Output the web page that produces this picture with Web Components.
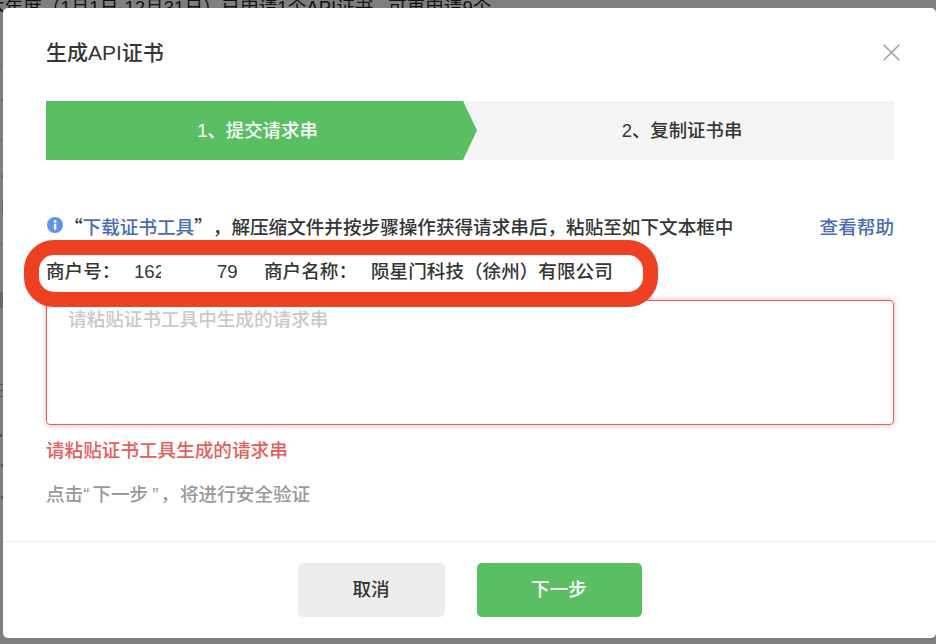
<!DOCTYPE html>
<html lang="zh-CN"><head><meta charset="utf-8">
<style>
html,body{margin:0;height:100%;overflow:hidden;background:#7f7f7f}
body{font-family:"Liberation Sans","Noto Sans CJK SC",sans-serif}
</style></head><body>
<api-page></api-page>
<template id="t-page"><style>
:host{display:block;position:relative;width:936px;height:644px;overflow:hidden;background:#7f7f7f}
.bg{margin:0;position:absolute;left:-14px;top:-5px;font-size:18.6px;line-height:26px;color:#111;white-space:nowrap}
.bg i{font-style:normal;font-size:14.6px}
.marks{position:absolute;left:0;top:0}
</style>
<p class="bg">本年度（1月1日-12月31日）已申请1个API证书<i>，</i>可再申请9个</p>
<svg class="marks" width="3" height="644" viewBox="0 0 3 644" fill="#555"><path d="M0 65h3v1H0zM0 140h3v1H0zM0 243h3v1H0zM1 176l2-3v5H1zM2 199h1v14H2zM1 99h2v2H1zM0 292h3v16H0z" opacity=".55"/><path d="M0 384h3v1H0zM0 390h3v1H0zM0 396h3v1H0zM0 434h2v3H0zM1 464h2v3H1zM1 496h2v3H1z"/></svg>
<api-dialog></api-dialog></template>

<template id="t-dialog"><style>
:host{display:flex;flex-direction:column;position:absolute;left:3px;top:8px;width:933px;height:630px;background:#fff;border-radius:5px;color:#353535;font-size:18.6px;font-weight:500;box-sizing:border-box}
header{display:flex;justify-content:space-between;align-items:center;padding:29px 36px 0 43px;height:32px}
header svg{margin-top:-2px}
h2{margin:0;font-size:21px;font-weight:500;line-height:32px;color:#353535}
svg{display:block}
.body{flex:1;padding:1px 42px 0 43px;display:flex;flex-direction:column;min-height:0}
api-steps{margin-top:31px}
.tip{display:flex;justify-content:space-between;align-items:center;margin-top:50px;height:30px}
.tip .l{display:flex;align-items:center;gap:1px;padding-left:1px}
.tip .t{text-spacing-trim:space-all}
a{color:#4a6cb3;text-decoration:none}
.q{font-family:"Noto Sans CJK SC",sans-serif}
.q1{padding-right:3px}.q2{padding:0 2px 0 4px}.c{padding-right:1px}
.info{position:relative;margin-top:17px;height:30px;line-height:30px;white-space:pre;display:flex}
.info span{display:block}
.patch{position:absolute;left:115px;top:0;width:54px;height:30px;background:#fff}
.mark{position:absolute;left:-22px;top:-17px;width:604px;height:37px;border:15px solid #ee4023;border-radius:30px;box-sizing:content-box}
.ta{margin-top:13px;height:123px;box-sizing:content-box;border:1px solid #e4605a;border-radius:4px;box-shadow:0 0 5px rgba(228,96,90,.5);padding:0 21px;line-height:38px;color:#c9c9c9}
.err{margin-top:11px;color:#e4605a;line-height:30px}
.hint{margin-top:14px;color:#9a9a9a;line-height:30px;text-spacing-trim:space-all}
footer{border-top:1px solid #ececec;height:97px;display:flex;justify-content:center;align-items:flex-start;gap:32px;padding:21px 0 0 0;box-sizing:border-box}
</style>
<header><h2>生成API证书</h2>
<svg width="17" height="17" viewBox="0 0 17 17" fill="none" stroke="#9b9b9b" stroke-width="1.4"><path d="M.7.7 16.3 16.3M16.3.7.7 16.3"/></svg></header>
<div class="body">
<api-steps></api-steps>
<div class="tip"><div class="l">
<svg width="16" height="16" viewBox="0 0 16 16"><circle cx="8" cy="8" r="8" fill="#5e94f0"/><rect x="6.9" y="6.8" width="2.4" height="5.8" fill="#fff"/><circle cx="8.1" cy="4.5" r="1.4" fill="#fff"/></svg>
<span class="t"><span class="q">“</span><a href="#">下载证书工具</a><span class="q">”</span>，解压缩文件并按步骤操作获得请求串后，粘贴至如下文本框中</span></div>
<a href="#">查看帮助</a></div>
<div class="info"><span style="width:88px">商户号：</span><span style="width:83px">162</span><span style="width:47px">79</span><span style="width:107px">商户名称：</span><span>陨星门科技（徐州）有限公司</span><div class="patch"></div><div class="mark"></div></div>
<div class="ta">请粘贴证书工具中生成的请求串</div>
<div class="err">请粘贴证书工具生成的请求串</div>
<div class="hint">点击<span class="q1">“</span>下一步<span class="q2">”</span><span class="c">，</span>将进行安全验证</div>
</div>
<footer><api-button>取消</api-button><api-button primary>下一步</api-button></footer></template>

<template id="t-steps"><style>
:host{display:flex;height:59px;position:relative;background:#f5f5f5;font-size:18.4px}
.s{flex:1;display:flex;align-items:center;justify-content:center;padding-bottom:4px;box-sizing:border-box}
.a{color:#fff;background:#5abf62;clip-path:polygon(0 0,calc(100% - 14px) 0,100% 50%,calc(100% - 14px) 100%,0 100%);flex:0 0 431px;padding-right:8px}
.b{color:#353535;padding-right:7px}
</style><div class="s a">1、提交请求串</div><div class="s b">2、复制证书串</div></template>

<template id="t-btn"><style>
:host{display:flex;align-items:center;justify-content:center;width:147px;height:54px;border-radius:5px;background:#ededed;color:#353535;font-size:18.6px;padding-bottom:6px;box-sizing:border-box}
:host([primary]){width:165px;background:#5abf62;color:#fff}
</style><slot></slot></template>

<script>
function def(name,id){customElements.define(name,class extends HTMLElement{constructor(){super();this.attachShadow({mode:"open"}).appendChild(document.getElementById(id).content.cloneNode(true));}});}
def("api-steps","t-steps");def("api-button","t-btn");def("api-dialog","t-dialog");def("api-page","t-page");
</script></body></html>
